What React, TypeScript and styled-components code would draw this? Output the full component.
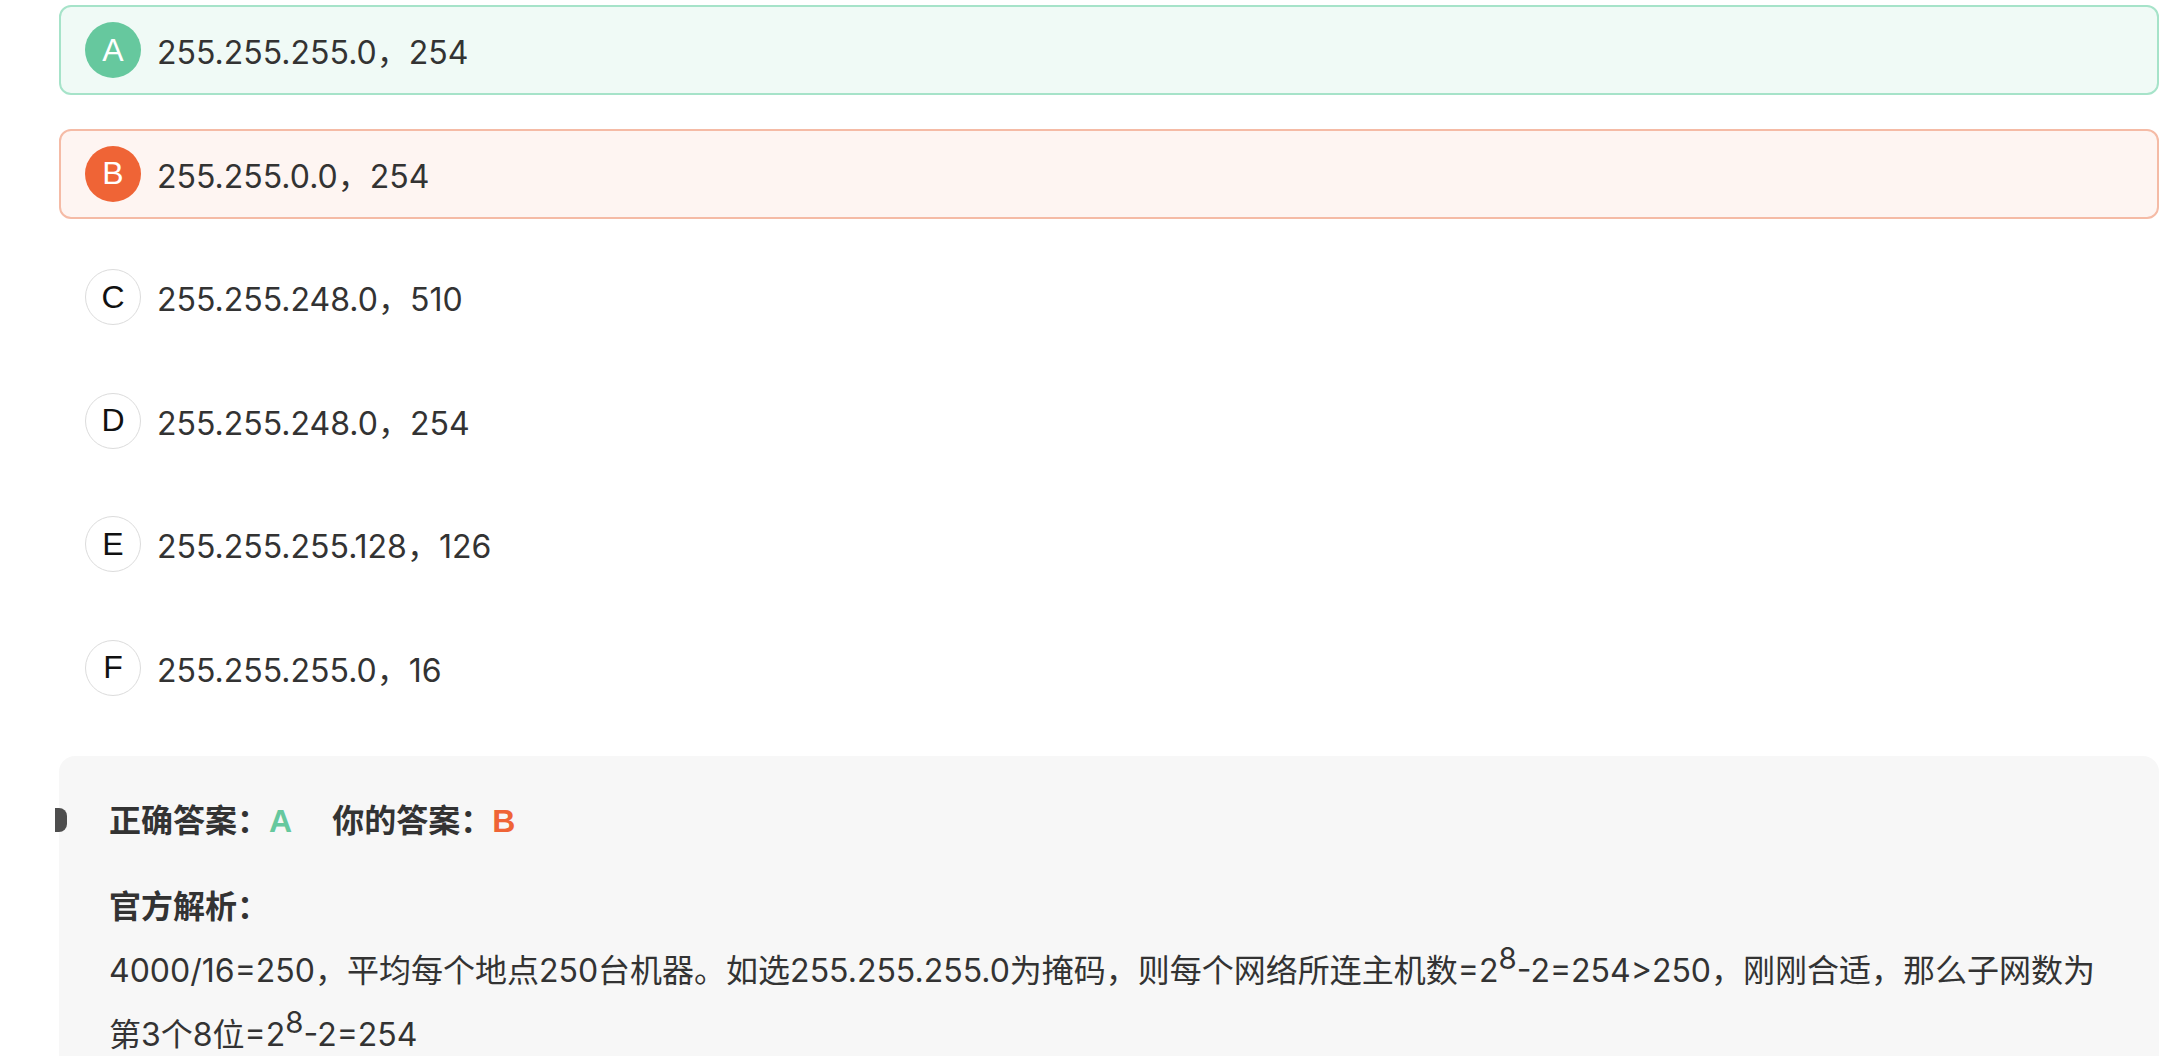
import styled, { createGlobalStyle, css } from "styled-components";

type OptionState = "correct" | "wrong" | "idle";

interface OptionItem {
  key: string;
  text: string;
  state: OptionState;
}

const options: OptionItem[] = [
  { key: "A", text: "255.255.255.0，254", state: "correct" },
  { key: "B", text: "255.255.0.0，254", state: "wrong" },
  { key: "C", text: "255.255.248.0，510", state: "idle" },
  { key: "D", text: "255.255.248.0，254", state: "idle" },
  { key: "E", text: "255.255.255.128，126", state: "idle" },
  { key: "F", text: "255.255.255.0，16", state: "idle" },
];

const GlobalStyle = createGlobalStyle`
  body {
    margin: 0;
    background: #fff;
    overflow: hidden;
    font-family: Inter, "Liberation Sans", "Noto Sans CJK SC", sans-serif;
    color: #333;
  }
`;

export default function App() {
  return (
    <>
      <GlobalStyle />
      <Page>
        <OptionList>
          {options.map((o) => (
            <Option key={o.key} $state={o.state}>
              <Badge $state={o.state}>{o.key}</Badge>
              <OptionText>{o.text}</OptionText>
            </Option>
          ))}
        </OptionList>

        <Analysis>
          <Marker />
          <AnswerLine>
            正确答案：<Letter $color="#66c89e">A</Letter>
            <Spacer />
            你的答案：<Letter $color="#ef6436">B</Letter>
          </AnswerLine>
          <SectionTitle>官方解析：</SectionTitle>
          <Paragraph>
            4000/16=250，平均每个地点250台机器。如选255.255.255.0为掩码，则每个网络所连主机数=2
            <Sup>8</Sup>-2=254&gt;250，刚刚合适，那么子网数为第3个8位=2<Sup>8</Sup>-2=254
          </Paragraph>
        </Analysis>
      </Page>
    </>
  );
}

const Page = styled.main`
  padding: 5px 9px 0 59px;
`;

const OptionList = styled.div`
  display: flex;
  flex-direction: column;
  gap: 33.6px;
`;

const stateStyles = {
  correct: css`
    border-color: #a6e3c9;
    background: #f0faf6;
  `,
  wrong: css`
    border-color: #f5bba6;
    background: #fef5f2;
  `,
  idle: css`
    border-color: transparent;
    background: transparent;
  `,
};

const Option = styled.div<{ $state: OptionState }>`
  box-sizing: border-box;
  height: 90px;
  display: flex;
  align-items: center;
  gap: 16px;
  padding-left: 24px;
  border: 2px solid;
  border-radius: 12px;
  ${({ $state }) => stateStyles[$state]}
`;

const Badge = styled.span<{ $state: OptionState }>`
  box-sizing: border-box;
  width: 56px;
  height: 56px;
  flex: none;
  border-radius: 50%;
  display: flex;
  align-items: center;
  justify-content: center;
  font-size: 32px;
  font-family: "Liberation Sans", sans-serif;
  ${({ $state }) =>
    $state === "correct"
      ? css`
          background: #66c89e;
          color: #fff;
        `
      : $state === "wrong"
      ? css`
          background: #ef6436;
          color: #fff;
        `
      : css`
          border: 1.5px solid #dcdcdc;
          background: #fff;
          color: #111;
        `}
`;

const OptionText = styled.span`
  font-size: 32px;
  color: #333;
`;

const Analysis = styled.section`
  position: relative;
  margin-top: 43px;
  padding: 33px 50px 60px;
  background: #f7f7f7;
  border-radius: 16px 16px 0 0;
  font-size: 32px;
  color: #333;
`;

const Marker = styled.span`
  position: absolute;
  left: -4px;
  top: 52px;
  width: 12px;
  height: 24px;
  background: #4e4e4e;
  border-radius: 0 8px 8px 0;
`;

const AnswerLine = styled.div`
  line-height: 64px;
  font-weight: 700;
`;

const Letter = styled.span<{ $color: string }>`
  color: ${({ $color }) => $color};
  font-family: "Liberation Sans", sans-serif;
`;

const Spacer = styled.span`
  display: inline-block;
  width: 40px;
`;

const SectionTitle = styled.div`
  margin-top: 22px;
  line-height: 64px;
  font-weight: 700;
`;

const Paragraph = styled.p`
  margin: 0;
  line-height: 64px;
`;

const Sup = styled.span`
  font-size: 0.92em;
  vertical-align: 0.44em;
  line-height: 0;
`;
